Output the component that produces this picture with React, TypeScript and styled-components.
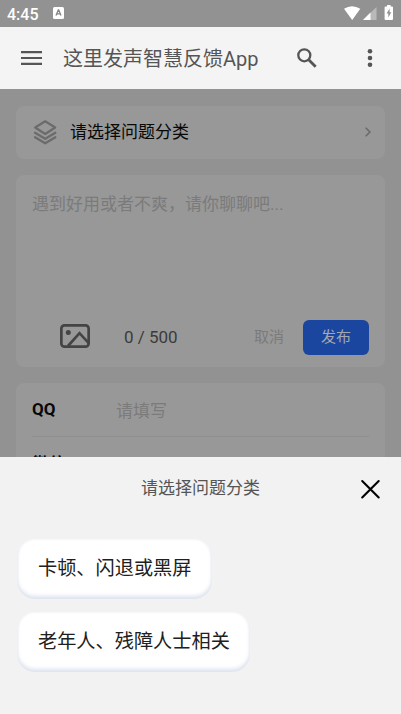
import React from "react";
import styled, { createGlobalStyle } from "styled-components";

const GlobalStyle = createGlobalStyle`
  * { box-sizing: border-box; }
  body { margin: 0; background: #f2f2f2; }
  button { border: 0; padding: 0; margin: 0; background: none; font: inherit; }
  svg { display: block; flex: none; }
`;

const Screen = styled.div`
  width: 401px;
  height: 714px;
  display: flex;
  flex-direction: column;
  overflow: hidden;
  font-family: Roboto, "Noto Sans CJK SC", sans-serif;
`;

const StatusBar = styled.header`
  flex: none;
  height: 27px;
  padding: 0 7px 1px;
  display: flex;
  align-items: center;
  background: #929292;
  color: #fff;
`;

const Clock = styled.span`
  width: 46px;
  font-size: 16px;
  font-weight: 500;
  line-height: 20px;
  padding-top: 3px;
`;

const StatusIcons = styled.div`
  margin-left: auto;
  display: flex;
  align-items: center;
`;

const AppBar = styled.nav`
  flex: none;
  height: 62px;
  display: flex;
  align-items: center;
  padding: 0 16px 0 21px;
  background: #f4f4f4;
  color: #555;
`;

const AppTitle = styled.h1`
  flex: 1;
  margin: 0 0 0 21px;
  padding-top: 2px;
  font-size: 20px;
  font-weight: 400;
  line-height: 30px;
  white-space: nowrap;
`;

const IconButton = styled.button`
  display: flex;
  align-items: center;
  justify-content: center;
  color: inherit;
`;

const SearchButton = styled(IconButton)`
  width: 30px;
  height: 30px;
  margin-right: 33px;
`;

const MoreButton = styled(IconButton)`
  width: 30px;
  height: 30px;
`;

const Page = styled.main`
  flex: none;
  height: 368px;
  padding: 17px 16px 0;
  display: flex;
  flex-direction: column;
  gap: 16px;
  overflow: hidden;
  background: #929292;
`;

const Card = styled.section`
  flex: none;
  border-radius: 8px;
  background: #989898;
`;

const CategoryRow = styled(Card)`
  height: 53px;
  display: flex;
  align-items: center;
  padding: 0 13px 0 17px;
  color: #6b6b6b;
`;

const CategoryLabel = styled.span`
  flex: 1;
  margin-left: 12px;
  padding-bottom: 2px;
  font-size: 17px;
  line-height: 26px;
  color: #080808;
`;

const Composer = styled(Card)`
  height: 192px;
  padding: 16px 16px 12px;
  display: flex;
  flex-direction: column;
  justify-content: space-between;
`;

const Placeholder = styled.span`
  font-size: 17px;
  line-height: 26px;
  color: #7b7b7b;
`;

const ComposerTools = styled.div`
  display: flex;
  align-items: center;
  height: 35px;
  padding-left: 28px;
  color: #444;
`;

const Counter = styled.span`
  margin-left: 34px;
  padding-bottom: 1px;
  font-size: 17px;
  line-height: 24px;
  color: #3b3b3b;
`;

const CancelButton = styled.button`
  margin-left: auto;
  margin-right: 1px;
  padding-bottom: 1px;
  font-size: 15px;
  line-height: 24px;
  color: #7b7b7b;
`;

const PublishButton = styled.button`
  width: 66px;
  height: 35px;
  margin-left: 18px;
  padding-bottom: 1px;
  border-radius: 6px;
  background: #1b46a0;
  color: #a3a7b1;
  font-size: 15px;
  line-height: 24px;
`;

const ContactCard = styled(Card)`
  height: 130px;
  padding: 0 16px;
`;

const Field = styled.div`
  height: 54px;
  display: flex;
  align-items: center;
  padding-top: 2px;
  border-bottom: 1px solid #8f8f8f;

  & + & {
    padding-top: 4px;
  }
`;

const FieldName = styled.span`
  width: 84px;
  padding-bottom: 3px;
  font-size: 17px;
  font-weight: 700;
  line-height: 24px;
  color: #080808;
`;

const Sheet = styled.section`
  flex: 1;
  display: flex;
  flex-direction: column;
  background: #f2f2f2;
`;

const SheetHeader = styled.header`
  height: 64px;
  display: grid;
  grid-template-columns: 1fr auto 1fr;
  align-items: center;
`;

const SheetTitle = styled.h2`
  grid-column: 2;
  margin: 0;
  font-size: 17px;
  font-weight: 400;
  line-height: 26px;
  padding-bottom: 2px;
  color: #555;
`;

const CloseButton = styled(IconButton)`
  justify-self: end;
  margin-right: 20px;
  color: #000;
`;

const Options = styled.div`
  display: flex;
  flex-direction: column;
  align-items: flex-start;
  gap: 13px;
  padding: 18px 17px;
`;

const Option = styled.button`
  height: 60px;
  padding: 0 20px 0 21px;
  border-radius: 18px;
  background: #fff;
  box-shadow: inset 0 -3px 4px #dde2ed, inset 0 0 3px #eceef3;
  font-size: 19.2px;
  line-height: 28px;
  white-space: nowrap;
  color: #202020;
`;

function KeyboardIcon() {
  return (
    <svg width="11" height="12" viewBox="0 0 11 12">
      <rect width="11" height="12" rx="1.5" fill="#fff" />
      <path d="M3 8.6 5.3 3h.4L8 8.6M3.8 6.8h3.4" fill="none" stroke="#858585" strokeWidth="1.3" />
    </svg>
  );
}

function SystemIcons() {
  return (
    <svg width="51" height="18" viewBox="0 0 51 18">
      <path d="M1 4.7Q9 -.4 17.3 4.7L9.2 15.9Z" fill="#fff" />
      <path d="M33.5 3V16H20Z" fill="#b9b9b9" />
      <path d="M27.5 8.6V16H20Z" fill="#fff" />
      <path d="M44 1h3.6v1.4h1.4q1 0 1 1V15q0 1-1 1h-6.4q-1 0-1-1V3.4q0-1 1-1H44Z" fill="#fff" />
      <path d="m46.6 4.5-3 5h1.7v4l3-5.2h-1.7Z" fill="#929292" />
    </svg>
  );
}

function MenuIcon() {
  return (
    <svg width="21" height="14" viewBox="0 0 21 14">
      <path d="M0 1.2h21M0 7h21M0 12.8h21" stroke="currentColor" strokeWidth="2.2" />
    </svg>
  );
}

function SearchIcon() {
  return (
    <svg width="20" height="20" viewBox="0 0 20 20" fill="none" stroke="currentColor">
      <circle cx="7.3" cy="7.3" r="6" strokeWidth="2.3" />
      <path d="m11.7 11.7 7 7" strokeWidth="2.8" />
    </svg>
  );
}

function MoreIcon() {
  return (
    <svg width="6" height="20" viewBox="0 0 6 20" fill="currentColor">
      <circle cx="3" cy="3.2" r="2.3" />
      <circle cx="3" cy="10" r="2.3" />
      <circle cx="3" cy="16.8" r="2.3" />
    </svg>
  );
}

function LayersIcon() {
  return (
    <svg width="25" height="26" viewBox="0 0 25 26" fill="none" stroke="currentColor" strokeWidth="2.2" strokeLinejoin="round" strokeLinecap="round">
      <path d="M12.2 1.3 22.2 7.5 12.2 14 2.2 7.5Z" />
      <path d="m2 12.7 10.2 6.1 10.2-6.1M2 17.2l10.2 6.1 10.2-6.1" />
    </svg>
  );
}

function ChevronIcon() {
  return (
    <svg width="8" height="12" viewBox="0 0 8 12" fill="none" stroke="currentColor" strokeWidth="1.6">
      <path d="m1.7.8 4.2 4.2-4.2 4.2" />
    </svg>
  );
}

function PictureIcon() {
  return (
    <svg width="30" height="27" viewBox="0 0 30 27" fill="none" stroke="currentColor" strokeWidth="2.7">
      <rect x="1.35" y="1.35" width="27.3" height="21.3" rx="3.2" />
      <path d="M8 22 19.5 9.2 29 19.4" />
      <circle cx="8.3" cy="8.4" r="2.5" fill="currentColor" stroke="none" />
    </svg>
  );
}

function CloseIcon() {
  return (
    <svg width="21" height="20" viewBox="0 0 21 20" stroke="currentColor" strokeWidth="2.1" strokeLinecap="round">
      <path d="m2.2 2 16.5 16.5M18.7 2 2.2 18.5" />
    </svg>
  );
}

const options = ["卡顿、闪退或黑屏", "老年人、残障人士相关"];
const fields = ["QQ", "微信"];

export default function App() {
  return (
    <>
      <GlobalStyle />
      <Screen lang="zh-CN">
        <StatusBar>
          <Clock>4:45</Clock>
          <KeyboardIcon />
          <StatusIcons>
            <SystemIcons />
          </StatusIcons>
        </StatusBar>
        <AppBar>
          <MenuIcon />
          <AppTitle>这里发声智慧反馈App</AppTitle>
          <SearchButton aria-label="搜索">
            <SearchIcon />
          </SearchButton>
          <MoreButton aria-label="更多">
            <MoreIcon />
          </MoreButton>
        </AppBar>
        <Page>
          <CategoryRow>
            <LayersIcon />
            <CategoryLabel>请选择问题分类</CategoryLabel>
            <ChevronIcon />
          </CategoryRow>
          <Composer>
            <Placeholder>遇到好用或者不爽，请你聊聊吧...</Placeholder>
            <ComposerTools>
              <PictureIcon />
              <Counter>0 / 500</Counter>
              <CancelButton>取消</CancelButton>
              <PublishButton>发布</PublishButton>
            </ComposerTools>
          </Composer>
          <ContactCard>
            {fields.map((name) => (
              <Field key={name}>
                <FieldName>{name}</FieldName>
                <Placeholder>请填写</Placeholder>
              </Field>
            ))}
          </ContactCard>
        </Page>
        <Sheet>
          <SheetHeader>
            <SheetTitle>请选择问题分类</SheetTitle>
            <CloseButton aria-label="关闭">
              <CloseIcon />
            </CloseButton>
          </SheetHeader>
          <Options>
            {options.map((label) => (
              <Option key={label}>{label}</Option>
            ))}
          </Options>
        </Sheet>
      </Screen>
    </>
  );
}
